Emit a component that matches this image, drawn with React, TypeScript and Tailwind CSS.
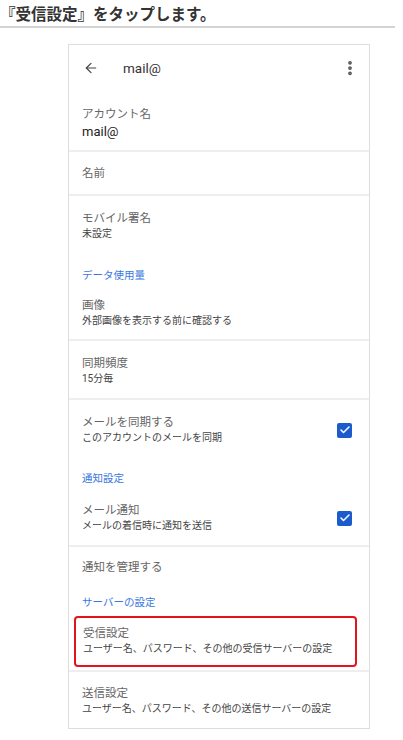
import { ArrowLeft, EllipsisVertical, Check } from "lucide-react";

const font = { fontFamily: '"Roboto", "Noto Sans CJK JP", sans-serif' };

function Title({ children }: { children: React.ReactNode }) {
  return <p className="text-[11.5px] leading-[15px] text-[#666]">{children}</p>;
}

function Sub({ children }: { children: React.ReactNode }) {
  return <p className="text-[10px] leading-[15px] text-[#444]">{children}</p>;
}

function Section({ children }: { children: React.ReactNode }) {
  return <p className="text-[10.5px] leading-[15px] text-[#3a78e0]">{children}</p>;
}

function Box() {
  return (
    <div className="grid h-[15px] w-[15px] place-items-center rounded-[2px] bg-[#1c5bcc]">
      <Check size={12} strokeWidth={3} className="text-white" />
    </div>
  );
}

function Divider() {
  return <div className="h-[2px] bg-[#eeeeee]" />;
}

export default function App() {
  return (
    <div className="min-h-[740px] w-[403px] bg-white" style={font}>
      <div className="w-[395px] border-b-2 border-[#d4d4d4] pt-[6px] pb-[1px]">
        <h1 className="text-[15.5px] leading-[19px] font-bold text-[#333]">『受信設定』をタップします。</h1>
      </div>

      <div className="mt-[16px] ml-[68px] w-[302px] border border-[#dddddd]">
        <div className="flex h-[46px] items-center pl-[14px] pr-[10px]">
          <ArrowLeft size={16} strokeWidth={1.8} className="text-[#444]" />
          <span className="ml-[24px] flex-1 text-[13.5px] text-[#333]">mail@</span>
          <EllipsisVertical size={18} strokeWidth={3} className="text-[#555]" />
        </div>

        <div className="pl-[13px] pt-[16px] pb-[8px]">
          <Title>アカウント名</Title>
          <p className="text-[13px] leading-[20px] text-[#222]">mail@</p>
        </div>
        <Divider />

        <div className="flex h-[42px] items-center pl-[13px]">
          <Title>名前</Title>
        </div>
        <Divider />

        <div className="pl-[13px] pt-[15px] pb-[11px]">
          <Title>モバイル署名</Title>
          <Sub>未設定</Sub>
          <div className="mt-[27px]">
            <Section>データ使用量</Section>
          </div>
          <div className="mt-[15px]">
            <Title>画像</Title>
            <Sub>外部画像を表示する前に確認する</Sub>
          </div>
        </div>
        <Divider />

        <div className="pl-[13px] pt-[15px] pb-[12px]">
          <Title>同期頻度</Title>
          <Sub>15分毎</Sub>
        </div>
        <Divider />

        <div className="pl-[13px] pr-[17px] pt-[15px] pb-[12px]">
          <div className="flex items-center justify-between">
            <div>
              <Title>メールを同期する</Title>
              <Sub>このアカウントのメールを同期</Sub>
            </div>
            <Box />
          </div>
          <div className="mt-[26px]">
            <Section>通知設定</Section>
          </div>
          <div className="mt-[17px] flex items-center justify-between">
            <div>
              <Title>メール通知</Title>
              <Sub>メールの着信時に通知を送信</Sub>
            </div>
            <Box />
          </div>
        </div>
        <Divider />

        <div className="pt-[13px] pb-[3px]">
          <div className="pl-[13px]">
            <Title>通知を管理する</Title>
            <div className="mt-[20px]">
              <Section>サーバーの設定</Section>
            </div>
          </div>
          <div className="mt-[6px] ml-[5px] mr-[12px] rounded-[4px] border-2 border-[#e0161c] pl-[7px] pt-[8px] pb-[9px]">
            <Title>受信設定</Title>
            <Sub>ユーザー名、パスワード、その他の受信サーバーの設定</Sub>
          </div>
        </div>
        <Divider />

        <div className="pl-[13px] pt-[14px] pb-[12px]">
          <Title>送信設定</Title>
          <Sub>ユーザー名、パスワード、その他の送信サーバーの設定</Sub>
        </div>
      </div>
    </div>
  );
}
